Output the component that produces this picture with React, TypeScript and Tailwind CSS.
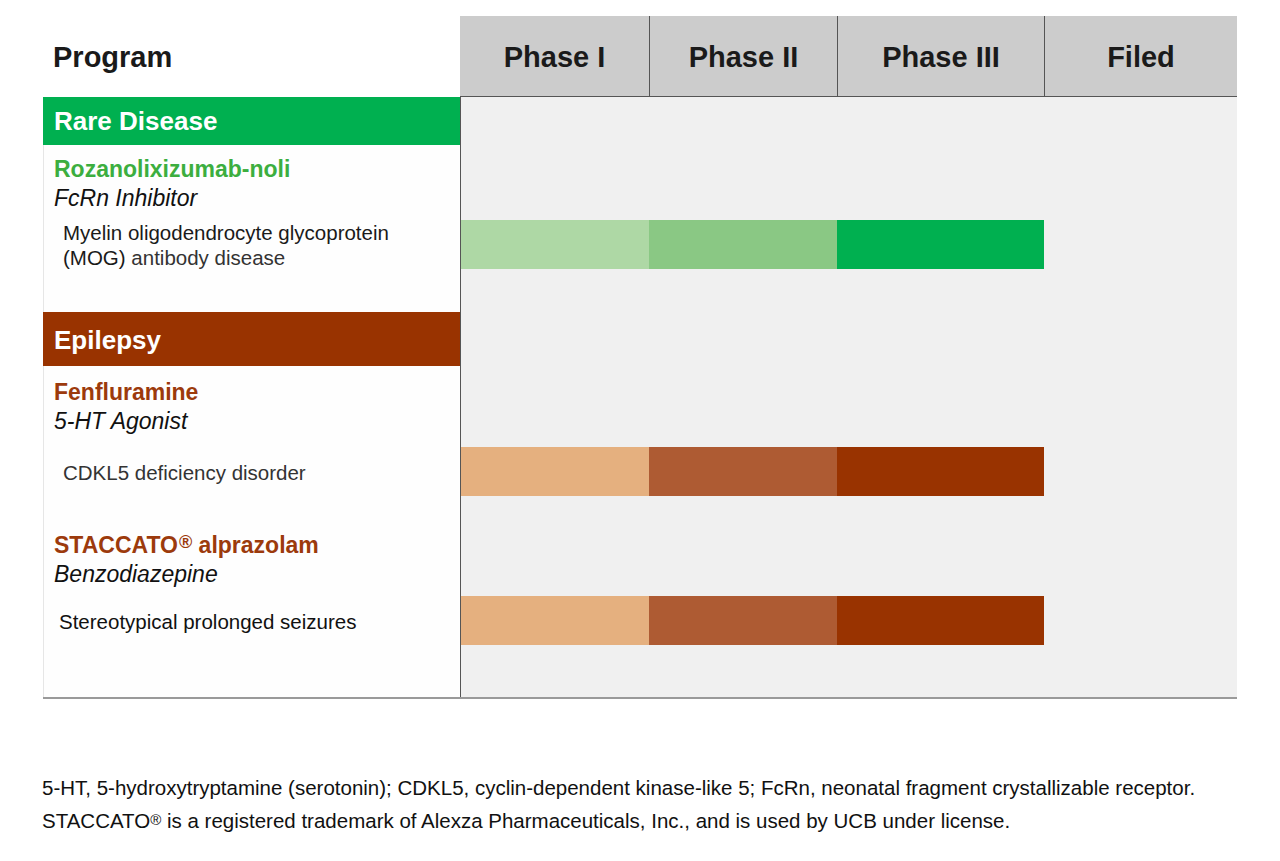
import React from "react";

type Bar = { light: string; mid: string; dark: string };

const green: Bar = { light: "bg-[#aed8a5]", mid: "bg-[#8ac884]", dark: "bg-[#00b050]" };
const brown: Bar = { light: "bg-[#e5b07f]", mid: "bg-[#ae5b33]", dark: "bg-[#993300]" };

function Row({ left, right, h, leftClass = "" }: { left?: React.ReactNode; right?: React.ReactNode; h: string; leftClass?: string }) {
  return (
    <div className={`flex ${h}`}>
      <div className={`w-[417px] border-l border-[#e6e6e6] bg-[#fefefe] ${leftClass}`}>{left}</div>
      <div className="w-[777px] border-l border-[#555555] bg-[#f0f0f0]">{right}</div>
    </div>
  );
}

function BarView({ c }: { c: Bar }) {
  return (
    <div className="flex h-full">
      <div className={`w-[188px] h-full ${c.light}`} />
      <div className={`w-[188px] h-full ${c.mid}`} />
      <div className={`w-[207px] h-full ${c.dark}`} />
    </div>
  );
}

function Program({
  name,
  cls,
  indication,
  color,
  bar,
  titleH,
  titlePt,
  bottomH,
  indPl,
}: {
  name: React.ReactNode;
  cls: string;
  indication: React.ReactNode;
  color: string;
  bar: Bar;
  titleH: string;
  titlePt: string;
  bottomH: string;
  indPl: string;
}) {
  return (
    <>
      <Row
        h={titleH}
        leftClass={`pl-[10px] ${titlePt}`}
        left={
          <div>
            <div className={`text-[23px] font-bold leading-[29px] ${color}`}>{name}</div>
            <div className="text-[23px] italic leading-[29px] text-[#111111]">{cls}</div>
          </div>
        }
      />
      <Row
        h="h-[49px]"
        leftClass={`flex items-center ${indPl}`}
        left={<div className="text-[20.5px] leading-[25px] text-[#1a1a1a] pt-[1px]">{indication}</div>}
        right={<BarView c={bar} />}
      />
      <Row h={bottomH} />
    </>
  );
}

export default function App() {
  const phase = "flex items-center justify-center pt-[3px] text-[29px] font-bold text-[#1a1a1a]";
  return (
    <div className="w-[1280px] h-[861px] bg-white text-[#1a1a1a]" style={{ fontFamily: '"Liberation Sans", Arial, sans-serif' }}>
      <div className="pt-[16px] pl-[43px]">
        {/* header */}
        <div className="flex h-[81px]">
          <div className="w-[417px] flex items-center pl-[10px] pt-[3px]">
            <span className="text-[29px] font-bold text-[#1a1a1a]">Program</span>
          </div>
          <div className="flex w-[777px] bg-[#cccccc] border-b border-[#555555]">
            <div className={`w-[189px] ${phase}`}>Phase I</div>
            <div className={`w-[188px] border-l border-[#555555] ${phase}`}>Phase II</div>
            <div className={`w-[207px] border-l border-[#555555] ${phase}`}>Phase III</div>
            <div className={`w-[193px] border-l border-[#555555] ${phase}`}>Filed</div>
          </div>
        </div>

        {/* body */}
        <div className="w-[1194px] border-b-2 border-[#9a9a9a]">
          <Row
            h="h-[48px]"
            leftClass="!bg-[#00b050] !border-[#00b050] flex items-center pl-[10px] pt-[1px]"
            left={<span className="text-[26px] font-bold text-white">Rare Disease</span>}
          />
          <Program
            name="Rozanolixizumab-noli"
            cls="FcRn Inhibitor"
            color="text-[#3cae3f]"
            bar={green}
            titleH="h-[75px]"
            titlePt="pt-[10px]"
            bottomH="h-[43px]"
            indPl="pl-[19px]"
            indication={
              <>
                Myelin oligodendrocyte glycoprotein
                <br />
                (MOG) <span className="text-[#333333]">antibody disease</span>
              </>
            }
          />
          <Row
            h="h-[54px]"
            leftClass="!bg-[#993300] !border-[#993300] flex items-center pl-[10px] pt-[2px]"
            left={<span className="text-[26px] font-bold text-white">Epilepsy</span>}
          />
          <Program
            name="Fenfluramine"
            cls="5-HT Agonist"
            color="text-[#9c3a0c]"
            bar={brown}
            titleH="h-[81px]"
            titlePt="pt-[12px]"
            bottomH="h-[25px]"
            indPl="pl-[19px]"
            indication={<span className="text-[#333333]">CDKL5 deficiency disorder</span>}
          />
          <Program
            name={
              <>
                STACCATO<sup className="text-[18px] relative top-[-5px] ml-[1px]">®</sup> alprazolam
              </>
            }
            cls="Benzodiazepine"
            color="text-[#9c3a0c]"
            bar={brown}
            titleH="h-[75px]"
            titlePt="pt-[10px]"
            bottomH="h-[52px]"
            indPl="pl-[15px]"
            indication={<span className="text-[#111111]">Stereotypical prolonged seizures</span>}
          />
        </div>
      </div>

      {/* footer */}
      <div className="pl-[42px] mt-[72px] text-[20.5px] leading-[33px] text-[#111111]">
        <div>5-HT, 5-hydroxytryptamine (serotonin); CDKL5, cyclin-dependent kinase-like 5; FcRn, neonatal fragment crystallizable receptor.</div>
        <div>
          STACCATO<sup className="text-[15px] relative top-[-3px]">®</sup> is a registered trademark of Alexza Pharmaceuticals, Inc., and is used by UCB under license.
        </div>
      </div>
    </div>
  );
}
